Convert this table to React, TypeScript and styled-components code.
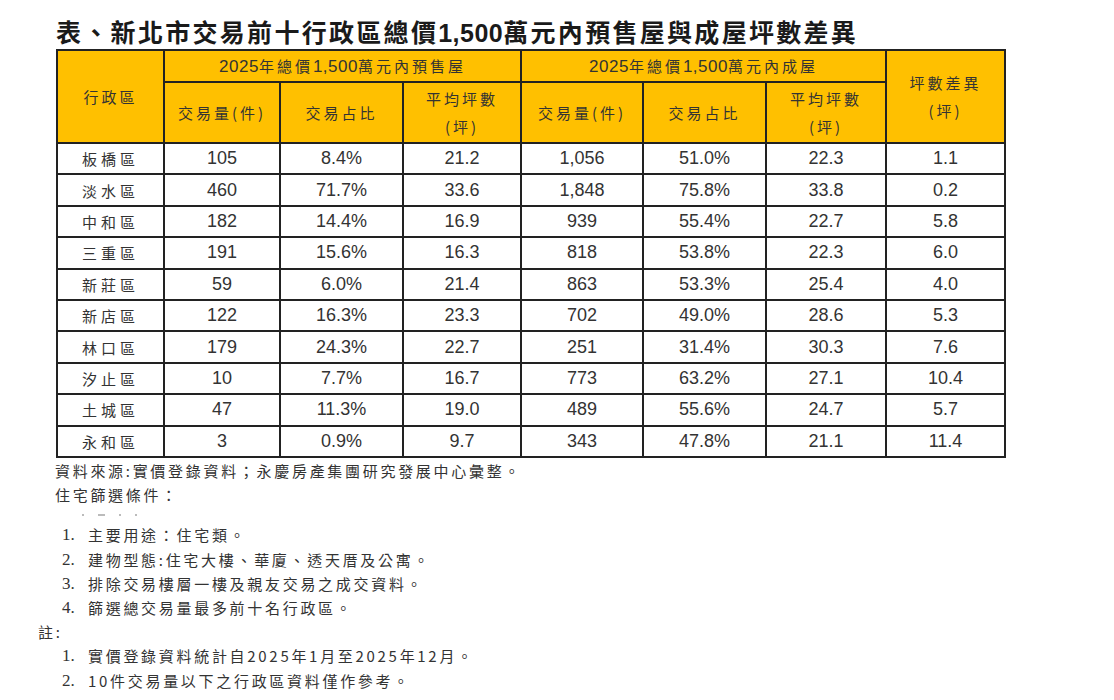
import React from 'react';
import styled, { createGlobalStyle } from 'styled-components';

const GlobalStyle = createGlobalStyle`
  html, body {
    margin: 0;
    padding: 0;
    background: #fff;
  }
  body {
    font-family: "Noto Sans CJK TC", "Liberation Sans", sans-serif;
    color: #222;
  }
`;

const ROWS = [
  ['板橋區', '105', '8.4%', '21.2', '1,056', '51.0%', '22.3', '1.1'],
  ['淡水區', '460', '71.7%', '33.6', '1,848', '75.8%', '33.8', '0.2'],
  ['中和區', '182', '14.4%', '16.9', '939', '55.4%', '22.7', '5.8'],
  ['三重區', '191', '15.6%', '16.3', '818', '53.8%', '22.3', '6.0'],
  ['新莊區', '59', '6.0%', '21.4', '863', '53.3%', '25.4', '4.0'],
  ['新店區', '122', '16.3%', '23.3', '702', '49.0%', '28.6', '5.3'],
  ['林口區', '179', '24.3%', '22.7', '251', '31.4%', '30.3', '7.6'],
  ['汐止區', '10', '7.7%', '16.7', '773', '63.2%', '27.1', '10.4'],
  ['土城區', '47', '11.3%', '19.0', '489', '55.6%', '24.7', '5.7'],
  ['永和區', '3', '0.9%', '9.7', '343', '47.8%', '21.1', '11.4'],
];

const COLS = [107, 116, 123, 118, 122, 123, 120, 119];

const FILTERS = [
  '主要用途：住宅類。',
  '建物型態:住宅大樓、華廈、透天厝及公寓。',
  '排除交易樓層一樓及親友交易之成交資料。',
  '篩選總交易量最多前十名行政區。',
];

const NOTES = [
  '實價登錄資料統計自2025年1月至2025年12月。',
  '10件交易量以下之行政區資料僅作參考。',
];

const Page = styled.div`
  width: 1114px;
  height: 700px;
  padding: 14px 0 0 38px;
  box-sizing: border-box;
  overflow: hidden;
`;

const Title = styled.h1`
  margin: 0 0 0 18px;
  font-size: 25px;
  line-height: 34px;
  font-weight: 700;
  letter-spacing: 2.3px;
  color: #1a1a1a;
  white-space: nowrap;
`;

const TitleNum = styled.span`
  font-family: "Liberation Sans", Arial, sans-serif;
  letter-spacing: 0.5px;
`;

const Table = styled.table`
  margin: -1px 0 0 18px;
  border-collapse: collapse;
  table-layout: fixed;
  width: 948px;
`;

const HeadCell = styled.th<{ $tall?: boolean }>`
  background: #ffc000;
  border: 2px solid #222;
  font-weight: 400;
  font-size: 15px;
  letter-spacing: 3px;
  line-height: 28px;
  color: #333;
  text-align: center;
  vertical-align: middle;
  height: ${p => (p.$tall ? '59px' : '30px')};
  padding: 0;
`;

const Num = styled.span`
  font-family: "Liberation Sans", Arial, sans-serif;
  font-size: 17px;
  letter-spacing: 0.5px;
`;

const Cell = styled.td<{ $name?: boolean }>`
  border: 2px solid #222;
  text-align: center;
  vertical-align: middle;
  height: 29.4px;
  padding: 0;
  color: #333;
  font-family: ${p =>
    p.$name ? '"Noto Sans CJK TC", sans-serif' : '"Liberation Sans", Arial, sans-serif'};
  font-size: ${p => (p.$name ? '15px' : '18px')};
  letter-spacing: ${p => (p.$name ? '4px' : '0')};
  line-height: 27px;
`;

const Notes = styled.div`
  margin-top: 1px;
  font-size: 15px;
  line-height: 24.2px;
  letter-spacing: 2.7px;
  color: #333;
`;

const Line = styled.div<{ $indent?: number }>`
  padding-left: ${p => p.$indent ?? 17}px;
  white-space: nowrap;
`;

const Specks = styled.div`
  height: 16px;
  padding-left: 44px;
  display: flex;
  align-items: center;
  gap: 14px;
`;

const Speck = styled.span<{ $w: number }>`
  width: ${p => p.$w}px;
  height: 2px;
  background: #bbb;
`;

const List = styled.ol`
  margin: 0;
  padding: 0 0 0 24px;
  list-style: none;
`;

const Item = styled.li`
  display: flex;
  white-space: nowrap;
`;

const Marker = styled.span`
  width: 26px;
  flex: none;
  font-family: "Liberation Serif", serif;
  font-size: 17px;
  letter-spacing: 0;
`;

function App() {
  return (
    <Page>
      <GlobalStyle />
      <Title>
        表、新北市交易前十行政區總價<TitleNum>1,500</TitleNum>萬元內預售屋與成屋坪數差異
      </Title>
      <Table>
        <colgroup>
          {COLS.map((w, i) => (
            <col key={i} style={{ width: w }} />
          ))}
        </colgroup>
        <thead>
          <tr>
            <HeadCell rowSpan={2}>行政區</HeadCell>
            <HeadCell colSpan={3}>
              <Num>2025</Num>年總價<Num>1,500</Num>萬元內預售屋
            </HeadCell>
            <HeadCell colSpan={3}>
              <Num>2025</Num>年總價<Num>1,500</Num>萬元內成屋
            </HeadCell>
            <HeadCell rowSpan={2}>
              坪數差異
              <br />
              (坪)
            </HeadCell>
          </tr>
          <tr>
            <HeadCell $tall>交易量(件)</HeadCell>
            <HeadCell $tall>交易占比</HeadCell>
            <HeadCell $tall>
              平均坪數
              <br />
              (坪)
            </HeadCell>
            <HeadCell $tall>交易量(件)</HeadCell>
            <HeadCell $tall>交易占比</HeadCell>
            <HeadCell $tall>
              平均坪數
              <br />
              (坪)
            </HeadCell>
          </tr>
        </thead>
        <tbody>
          {ROWS.map(row => (
            <tr key={row[0]}>
              {row.map((v, i) => (
                <Cell key={i} $name={i === 0}>
                  {v}
                </Cell>
              ))}
            </tr>
          ))}
        </tbody>
      </Table>
      <Notes>
        <Line>資料來源:實價登錄資料；永慶房產集團研究發展中心彙整。</Line>
        <Line>住宅篩選條件：</Line>
        <Specks>
          <Speck $w={2} />
          <Speck $w={7} />
          <Speck $w={2} />
          <Speck $w={2} />
        </Specks>
        <List>
          {FILTERS.map((t, i) => (
            <Item key={t}>
              <Marker>{i + 1}.</Marker>
              {t}
            </Item>
          ))}
        </List>
        <Line $indent={0}>註:</Line>
        <List>
          {NOTES.map((t, i) => (
            <Item key={t}>
              <Marker>{i + 1}.</Marker>
              {t}
            </Item>
          ))}
        </List>
      </Notes>
    </Page>
  );
}

export default App;
